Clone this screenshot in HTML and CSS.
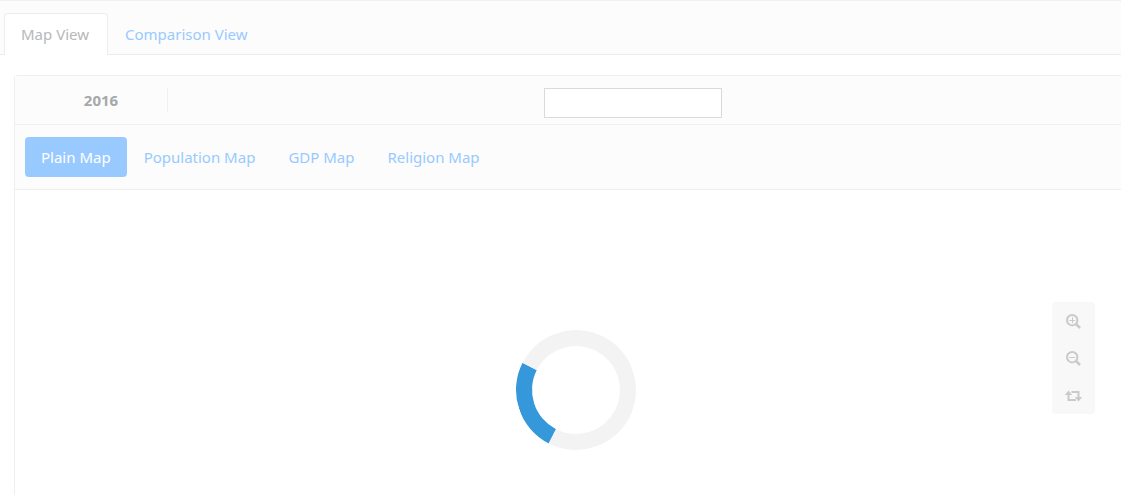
FILE: index.html
```html
<!DOCTYPE html>
<html lang="en">
<head>
<meta charset="utf-8">
<title>Map View</title>
<link rel="stylesheet" href="styles.css">
</head>
<body>
<nav class="tabs">
  <a class="tab tab-active" href="#map">Map View</a>
  <a class="tab" href="#comparison">Comparison View</a>
</nav>
<main class="card">
  <header class="toolbar">
    <strong class="year">2016</strong>
    <div class="search"><input class="search-box" type="text" aria-label="Search"></div>
  </header>
  <nav class="pills">
    <a class="pill pill-active" href="#plain">Plain Map</a>
    <a class="pill" href="#population">Population Map</a>
    <a class="pill" href="#gdp">GDP Map</a>
    <a class="pill" href="#religion">Religion Map</a>
  </nav>
  <section class="map">
    <div class="spinner" role="status" aria-label="Loading"></div>
    <div class="controls">
      <button class="control" type="button" aria-label="Zoom in">
        <svg class="icon" viewBox="0 0 15 15"><circle cx="6.2" cy="6.2" r="5.2"/><path class="handle" d="M10 10l4 4"/><path class="thin" d="M3.2 6.5h6M6.5 3.2v6"/></svg>
      </button>
      <button class="control" type="button" aria-label="Zoom out">
        <svg class="icon" viewBox="0 0 15 15"><circle cx="6.2" cy="6.2" r="5.2"/><path class="handle" d="M10 10l4 4"/><path class="thin" d="M3.2 6.5h6"/></svg>
      </button>
      <button class="control" type="button" aria-label="Reset">
        <svg class="icon" viewBox="0 0 15 15"><path d="M2.5 6v6H10M5.5 4h7v6"/><path class="solid" d="M2.5 2.5L6.2 7H-1.2zM12.5 13.5L8.8 9h7.4z"/></svg>
      </button>
    </div>
  </section>
</main>
</body>
</html>
```
FILE: styles.css
```css
* {
  box-sizing: border-box;
}

body {
  margin: 0;
  min-height: 100vh;
  display: flex;
  flex-direction: column;
  background: #fff;
  color: #a6a8aa;
  font: 15px/24px "Noto Sans", "Open Sans", sans-serif;
}

a {
  color: #99caff;
  text-decoration: none;
}

.tabs {
  display: flex;
  padding: 12px 4px 0;
  background: #fcfcfc;
  border-top: 1px solid #f0f0f0;
  border-bottom: 1px solid #ececec;
}

.tab {
  margin-bottom: -1px;
  padding: 8px 18px 8px 16px;
  border: 1px solid transparent;
  border-radius: 4px 4px 0 0;
}

.tab-active {
  color: #b6b8ba;
  background: #fff;
  border-color: #ececec #ececec #fff;
}

.card {
  flex: 1;
  display: flex;
  flex-direction: column;
  margin: 20px 0 0 14px;
  border: 1px solid #efefef;
  border-width: 1px 0 0 1px;
  border-radius: 4px 0 0 0;
}

.toolbar {
  display: flex;
  align-items: flex-start;
  padding: 12px 24px 6px 20px;
  background: #fcfcfc;
  border-bottom: 1px solid #efefef;
}

.year {
  width: 133px;
  border-right: 1px solid #f0f0f0;
  text-align: center;
}

.search {
  flex: 1;
  display: flex;
  justify-content: center;
}

.search-box {
  width: 178px;
  height: 30px;
  padding: 0 8px;
  border: 1px solid #dadada;
  background: #fff;
  font: inherit;
}

.pills {
  display: flex;
  gap: 1px;
  padding: 12px 10px;
  background: #fcfcfc;
  border-bottom: 1px solid #efefef;
}

.pill {
  padding: 8px 16px;
  border-radius: 4px;
}

.pill-active {
  background: #99caff;
  color: #fff;
}

.map {
  position: relative;
  flex: 1;
  display: flex;
  justify-content: center;
  padding: 140px 0 0 16px;
}

.spinner {
  width: 120px;
  height: 120px;
  border: 16px solid #f3f3f3;
  border-top-color: #3498db;
  border-radius: 50%;
  transform: rotate(-108deg);
}

.controls {
  position: absolute;
  top: 112px;
  right: 26px;
  display: flex;
  flex-direction: column;
  width: 43px;
  padding-top: 1px;
  border-radius: 4px;
  background: #f8f8f8;
}

.control {
  display: flex;
  align-items: center;
  justify-content: center;
  height: 37px;
  padding: 0;
  border: 0;
  background: none;
  color: #cacaca;
}

.icon {
  width: 15px;
  height: 15px;
  overflow: visible;
  fill: none;
  stroke: currentColor;
  stroke-width: 2;
}

.icon .handle {
  stroke-width: 2.5;
}

.icon .thin {
  stroke-width: 1;
}

.icon .solid {
  fill: currentColor;
  stroke: none;
}
```
